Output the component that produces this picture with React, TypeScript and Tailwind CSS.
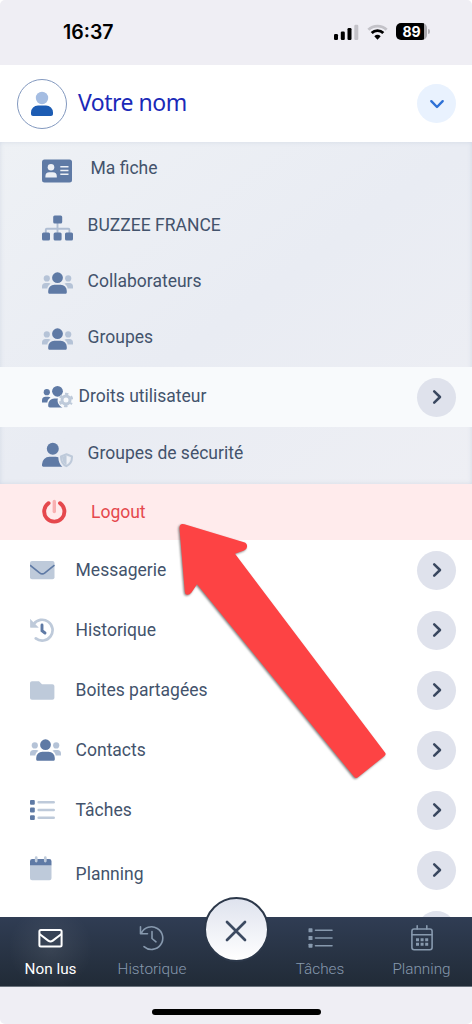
import type { ReactNode } from 'react';
import clsx from 'clsx';

const DARK = '#5f7aa5';
const LIGHT = '#becada';

function Svg({ w, h, children }: { w: number; h: number; children: ReactNode }) {
  return (
    <svg width={w} height={h} viewBox={`0 0 ${w} ${h}`} fill="none" className="shrink-0">
      {children}
    </svg>
  );
}

/* ---------- menu icons ---------- */

function CardIcon() {
  return (
    <Svg w={30} h={24}>
      <rect x="0" y="0.5" width="30" height="23" rx="2.5" fill={DARK} />
      <circle cx="9" cy="8.3" r="3.3" fill="#edf0f5" />
      <path d="M3.4 18.4v-1.2a4 4 0 0 1 4-4h3.4a4 4 0 0 1 4 4v1.2z" fill="#edf0f5" />
      <path d="M18.3 7.7h8.2M18.3 11.5h8.2M18.3 15.3h8.2" stroke="#edf0f5" strokeWidth="1.5" />
    </Svg>
  );
}

function SitemapIcon() {
  return (
    <Svg w={31} h={26}>
      <path d="M15.5 8v10M3.8 18v-3.2a1 1 0 0 1 1-1h21.6a1 1 0 0 1 1 1V18" stroke="#b0bed3" strokeWidth="1.9" />
      <rect x="11.2" y="0.6" width="9" height="8" rx="1.5" fill={DARK} />
      <rect x="0" y="17.6" width="8" height="7.8" rx="1.5" fill={DARK} />
      <rect x="11.6" y="17.6" width="8" height="7.8" rx="1.5" fill={DARK} />
      <rect x="23" y="17.6" width="8" height="7.8" rx="1.5" fill={DARK} />
    </Svg>
  );
}

function UsersIcon() {
  return (
    <Svg w={31} h={22}>
      <g fill="#b5c3d7">
        <circle cx="4.8" cy="6.4" r="3.1" />
        <circle cx="26.2" cy="6.4" r="3.1" />
        <path d="M0 16.6v-2A3.6 3.6 0 0 1 3.6 11h2.6c.9 0 1.7.3 2.3.8-1.7 1-2.9 2.7-3.2 4.8z" />
        <path d="M31 16.6v-2a3.6 3.6 0 0 0-3.6-3.6h-2.6c-.9 0-1.7.3-2.3.8 1.7 1 2.9 2.7 3.2 4.8z" />
      </g>
      <circle cx="15.5" cy="5.7" r="5.4" fill={DARK} />
      <path d="M6.2 20.2v-1.3a6.1 6.1 0 0 1 6.1-6.1h6.4a6.1 6.1 0 0 1 6.1 6.1v1.3c0 .9-.7 1.6-1.6 1.6H7.8c-.9 0-1.6-.7-1.6-1.6z" fill={DARK} />
    </Svg>
  );
}

function UsersGearIcon() {
  return (
    <Svg w={31} h={24}>
      <g fill={DARK}>
        <circle cx="4.8" cy="7.2" r="3.1" />
        <circle cx="15.5" cy="6.3" r="5.4" />
        <path d="M0 17.4v-2a3.6 3.6 0 0 1 3.6-3.6h2.6c.9 0 1.7.3 2.3.8-1.7 1-2.9 2.7-3.2 4.8z" />
        <path d="M6.2 21v-1.5a6.1 6.1 0 0 1 6.1-6.1h3.6c-1 3 .4 7 4.6 9H7.8c-.9 0-1.6-.6-1.6-1.4z" />
      </g>
      <circle cx="24" cy="15" r="4" stroke={LIGHT} strokeWidth="3" />
      <circle cx="24" cy="15" r="6.2" stroke={LIGHT} strokeWidth="2.2" strokeDasharray="3.2 3.293" strokeDashoffset="1.6" transform="rotate(30 24 15)" />
    </Svg>
  );
}

function UserShieldIcon() {
  return (
    <Svg w={31} h={26}>
      <circle cx="10.8" cy="6.8" r="6" fill={DARK} />
      <path d="M0 23.6v-1.3a7.5 7.5 0 0 1 7.5-7.5h6.3c.9 0 1.7.2 2.5.5.1 4 1.5 7.5 4 9.5H1.3c-.7 0-1.3-.5-1.3-1.2z" fill={DARK} />
      <path d="M24.5 12.3l5.5 2.2c.1 4.5-1.6 7.9-5.5 9.7-3.9-1.8-5.6-5.2-5.5-9.7z" stroke={LIGHT} strokeWidth="2" strokeLinejoin="round" />
      <path d="M24.5 14.5v7.5c2.2-1.5 3.3-3.5 3.3-6.2z" fill="#eef1f6" />
      <path d="M20 15l4.5-1.8v9.8c-3-1.7-4.5-4.4-4.5-8z" fill={LIGHT} />
    </Svg>
  );
}

function PowerIcon() {
  return (
    <Svg w={25} h={26}>
      <path d="M6.6 4.2a10.100 10.100 0 1 0 11.400 0" stroke="#e5484d" strokeWidth="3.9" strokeLinecap="round" />
      <path d="M12.3 2.5v10" stroke="#f8b0b1" strokeWidth="3.4" strokeLinecap="round" />
    </Svg>
  );
}

function EnvelopeIcon() {
  return (
    <Svg w={25} h={20}>
      <rect x="0" y="0.9" width="24.5" height="18.4" rx="2" fill={LIGHT} />
      <path d="M0 5.2l9.6 7.6c1.6 1.3 3.7 1.3 5.3 0l9.6-7.6" stroke={DARK} strokeWidth="1.6" />
    </Svg>
  );
}

function HistoryIcon() {
  return (
    <Svg w={24} h={24}>
      <path d="M3.6 6.3A10.4 10.4 0 1 1 5.8 20.4" stroke={LIGHT} strokeWidth="2.7" strokeLinecap="round" />
      <path d="M.2 1.2v7.6c0 .4.3.6.6.6h7.5z" fill={LIGHT} stroke={LIGHT} strokeWidth=".5" />
      <path d="M12 7v5.7l3 2.3" stroke={DARK} strokeWidth="2.9" strokeLinecap="round" />
    </Svg>
  );
}

function FolderIcon() {
  return (
    <Svg w={25} h={19}>
      <path d="M2 .3h7l3 3h10.3c1.2 0 2.1.9 2.1 2v11.4c0 1.100-.9 2-2.1 2H2c-1.1 0-2-.9-2-2V2.3c0-1.1.9-2 2-2z" fill={LIGHT} />
    </Svg>
  );
}

function TasksIcon() {
  return (
    <Svg w={25} h={22}>
      <path d="M8.7 3.3h15M8.7 11h15M8.7 18.7h15" stroke={LIGHT} strokeWidth="2.6" strokeLinecap="round" />
      <g fill={DARK}>
        <rect x="0" y="0.9" width="4.8" height="4.8" rx="1" />
        <rect x="0" y="8.6" width="4.8" height="4.8" rx="1" />
        <rect x="0" y="16.3" width="4.8" height="4.8" rx="1" />
      </g>
    </Svg>
  );
}

function CalendarIcon() {
  return (
    <Svg w={22} h={25}>
      <path d="M0 9h21.5v13.2a2.1 2.1 0 0 1-2.1 2.1H2.1A2.1 2.1 0 0 1 0 22.2z" fill={LIGHT} />
      <path d="M0 9.2V5.3a2.2 2.2 0 0 1 2.2-2.2h17.1a2.2 2.2 0 0 1 2.2 2.2v3.9z" fill={DARK} />
      <path d="M6.2 1.5v3.6M15.3 1.5v3.6" stroke={LIGHT} strokeWidth="2.7" strokeLinecap="round" />
    </Svg>
  );
}

/* ---------- status bar ---------- */

function StatusBar() {
  return (
    <div className="flex h-[65px] shrink-0 items-center bg-[#efeef4] pb-[2px] pl-[63px] pr-[42px]">
      <span className="font-['Inter','Liberation_Sans',sans-serif] text-[19.5px] font-semibold text-black">16:37</span>
      <div className="ml-auto flex items-center gap-[8px]">
        <Svg w={25} h={16}>
          <rect x="0" y="10" width="4" height="6" rx="1.2" fill="#000" />
          <rect x="6.8" y="7.5" width="4" height="8.5" rx="1.2" fill="#000" />
          <rect x="13.5" y="4" width="4" height="12" rx="1.2" fill="#000" />
          <rect x="20.3" y="0.7" width="4" height="15.3" rx="1.2" fill="#c3c2c8" />
        </Svg>
        <Svg w={21} h={16}>
          <path d="M1.4 5.8a13 13 0 0 1 18.2 0" stroke="#c3c2c8" strokeWidth="2.9" />
          <path d="M4.7 9a8.3 8.3 0 0 1 11.6 0" stroke="#000" strokeWidth="2.9" />
          <path d="M10.5 15.7l-3.2-3.4a4.7 4.7 0 0 1 6.4 0z" fill="#000" />
        </Svg>
        <div className="flex items-center gap-px">
          <div className="flex h-[17px] w-[31px] items-center justify-center overflow-hidden rounded-[5px] bg-[linear-gradient(90deg,#000_28px,#a9a8ad_28px)] font-['Inter','Liberation_Sans',sans-serif] text-[14px] font-bold text-white">
            89
          </div>
          <div className="h-[5px] w-[2px] rounded-r-full bg-[#b4b3b9]" />
        </div>
      </div>
    </div>
  );
}

/* ---------- menu ---------- */

function Chevron() {
  return (
    <span className="ml-auto mr-4 flex size-[39px] shrink-0 items-center justify-center rounded-full bg-[#dfe2ec]">
      <Svg w={12} h={16}>
        <path d="M3.2 2.3L9 8l-5.8 5.7" stroke="#39475f" strokeWidth="2.5" strokeLinecap="round" strokeLinejoin="round" />
      </Svg>
    </span>
  );
}

interface Item {
  label: string;
  icon: ReactNode;
  row?: string;
  iconBox?: string;
  text?: string;
  chevron?: boolean;
}

const subItems: Item[] = [
  { label: 'Ma fiche', icon: <CardIcon />, row: 'h-[57px]', text: 'ml-[3px] pb-[6px]' },
  { label: 'BUZZEE FRANCE', icon: <SitemapIcon />, row: 'h-[56px]', iconBox: 'pt-[1px]', text: 'pb-[4px]' },
  { label: 'Collaborateurs', icon: <UsersIcon />, row: 'h-[56px]', text: 'pb-[4px]' },
  { label: 'Groupes', icon: <UsersIcon />, row: 'h-[56px]', text: 'pb-[4px]' },
  { label: 'Droits utilisateur', icon: <UsersGearIcon />, row: 'h-[60px] bg-[#f8fafc]', text: '-ml-[9px] pb-[2px]', chevron: true },
  { label: 'Groupes de sécurité', icon: <UserShieldIcon />, row: 'h-[57px]', iconBox: 'pb-[2px]', text: 'pb-[6px]' },
];

const mainItems: Item[] = [
  { label: 'Messagerie', icon: <EnvelopeIcon /> },
  { label: 'Historique', icon: <HistoryIcon /> },
  { label: 'Boites partagées', icon: <FolderIcon /> },
  { label: 'Contacts', icon: <UsersIcon /> },
  { label: 'Tâches', icon: <TasksIcon /> },
  { label: 'Planning', icon: <CalendarIcon />, iconBox: 'pb-[3px]', text: 'pt-[7px]' },
];

function MenuRow({ item, sub }: { item: Item; sub?: boolean }) {
  return (
    <div className={clsx('flex shrink-0 items-center', sub ? 'pl-[42px]' : 'h-[60px] pl-[30px]', item.row)}>
      <span className={clsx('flex w-[45.6px] shrink-0', item.iconBox)}>{item.icon}</span>
      <span className={clsx('whitespace-nowrap', item.text)}>{item.label}</span>
      {(item.chevron || !sub) && <Chevron />}
    </div>
  );
}

/* ---------- bottom bar ---------- */

function Tab({ label, active, children }: { label: string; active?: boolean; children: ReactNode }) {
  return (
    <div
      className={clsx(
        'flex flex-col items-center pt-[6px] text-[15.3px]',
        active
          ? 'bg-[radial-gradient(circle_at_50%_45%,rgba(255,255,255,0.08),transparent_42px)] text-white'
          : 'font-light text-[#8799ae]',
      )}
    >
      <span className="flex h-[29px] items-center">{children}</span>
      <span className="mt-[6px] leading-[22px]">{label}</span>
    </div>
  );
}

function TabBar() {
  return (
    <nav className="relative grid h-[70px] shrink-0 grid-cols-[101px_102px_66px_102px_101px] border-b border-[#6a727c] bg-linear-to-b from-[#303d54] to-[#212b37]">
      <Tab label="Non lus" active>
        <Svg w={25} h={20}>
          <rect x="1.4" y="1.9" width="22.2" height="16.6" rx="1.5" stroke="#fff" strokeWidth="2" />
          <path d="M1.5 6l8.700 6.6c1.4 1.1 3.2 1.1 4.6 0L23.5 6" stroke="#fff" strokeWidth="2" />
        </Svg>
      </Tab>
      <Tab label="Historique">
        <Svg w={26} h={26}>
          <path d="M2.3 8.3A11.3 11.3 0 1 1 5 21.6M1.5 1.8v7h7M13 6.5v7l4 3.3" stroke="currentColor" strokeWidth="1.6" strokeLinecap="round" strokeLinejoin="round" />
        </Svg>
      </Tab>
      <button className="-mt-[20px] flex size-[65px] items-center justify-center justify-self-center rounded-full border-2 border-[#2c384a] bg-linear-to-b from-[#dfe3ee] to-white pt-[2px]">
        <Svg w={24} h={24}>
          <path d="M3 3l18 18M21 3L3 21" stroke="#3c4a61" strokeWidth="2.7" strokeLinecap="round" />
        </Svg>
      </button>
      <Tab label="Tâches">
        <Svg w={25} h={20}>
          <path d="M7.5 2.3H24M7.5 10H24M7.5 17.7H24" stroke="currentColor" strokeWidth="1.6" strokeLinecap="round" />
          <g fill="currentColor">
            <rect x="0.5" y="0.3" width="4" height="4" rx=".6" />
            <rect x="0.5" y="8" width="4" height="4" rx=".6" />
            <rect x="0.5" y="15.7" width="4" height="4" rx=".6" />
          </g>
        </Svg>
      </Tab>
      <Tab label="Planning">
        <Svg w={22} h={26}>
          <rect x="0.9" y="4" width="20.2" height="20.8" rx="2.2" stroke="currentColor" strokeWidth="1.6" />
          <path d="M1 9.7h20M6.2.8V4M15.8.8V4" stroke="currentColor" strokeWidth="1.6" strokeLinecap="round" />
          <path d="M5 14.7h12.3M5 19.3h12.3" stroke="currentColor" strokeWidth="3" strokeDasharray="3 1.6" />
        </Svg>
      </Tab>
    </nav>
  );
}

function Arrow() {
  return (
    <svg width="220" height="270" viewBox="172 516 220 270" className="pointer-events-none absolute left-[172px] top-[516px] drop-shadow-[-1px_1px_1px_rgba(0,0,0,0.5)]">
      <path
        d="M184.5 524.2 L244 542.3 Q247.6 543.5 247 547 Q246.7 549.7 244 550.6 L235 553.7 L385 752.5 Q386.5 754.5 384.5 756 L358 777.3 Q356 778.8 354.3 777 L197 584.2 L191.5 592.5 Q189.5 595.2 187 594.8 Q185 594.5 184.8 591.5 L179.5 528.5 Q179.3 522.7 184.5 524.2 Z"
        fill="#fd4344"
      />
    </svg>
  );
}

export default function App() {
  return (
    <div className="bg-white">
      <div className="relative flex h-[1024px] w-[472px] flex-col overflow-hidden rounded-[5px] bg-white font-['Roboto',sans-serif] text-[17.5px] leading-6 text-[#43536c]">
        <StatusBar />

        <header className="flex h-[77px] shrink-0 items-center pl-[17px] pr-4">
          <span className="flex size-[50px] items-center justify-center rounded-full border border-[#8399bf]">
            <Svg w={22} h={26}>
              <circle cx="11" cy="7" r="6.2" fill="#a5bde2" />
              <path d="M0 23v-1.5a7 7 0 0 1 7-7h8a7 7 0 0 1 7 7V23c0 1.2-.9 2-2 2H2c-1.1 0-2-.8-2-2z" fill="#1d5cb3" />
            </Svg>
          </span>
          <span className="ml-[11px] pb-[3px] font-['Noto_Sans','Open_Sans',sans-serif] text-[23px] tracking-[-0.5px] text-[#1a29b8]">Votre nom</span>
          <span className="ml-auto flex size-[39px] items-center justify-center rounded-full bg-[#e9f2fe]">
            <Svg w={16} h={12}>
              <path d="M2.3 3.2L8 9l5.7-5.8" stroke="#2e71d6" strokeWidth="2.4" strokeLinecap="round" strokeLinejoin="round" />
            </Svg>
          </span>
        </header>

        <section className="shrink-0 bg-linear-to-br from-[#eef1f5] via-[#e9ecf3] to-[#eeeff4] shadow-[inset_0_0_4px_rgba(150,165,195,0.3)]">
          {subItems.map((item) => (
            <MenuRow key={item.label} item={item} sub />
          ))}
        </section>

        <div className="flex h-[56px] shrink-0 items-center bg-[#ffebec] pl-[42px] text-[#e5484d]">
          <span className="w-[49px]">
            <PowerIcon />
          </span>
          <span>Logout</span>
        </div>

        <main className="flex min-h-0 flex-1 flex-col overflow-hidden">
          {mainItems.map((item) => (
            <MenuRow key={item.label} item={item} />
          ))}
          <div className="flex h-[60px] shrink-0 items-center">
            <Chevron />
          </div>
        </main>

        <TabBar />
        <div className="flex h-[37px] shrink-0 justify-center bg-[#efeef4] pt-[22px]">
          <div className="h-[6px] w-[169px] rounded-full bg-black" />
        </div>
        <Arrow />
      </div>
    </div>
  );
}
